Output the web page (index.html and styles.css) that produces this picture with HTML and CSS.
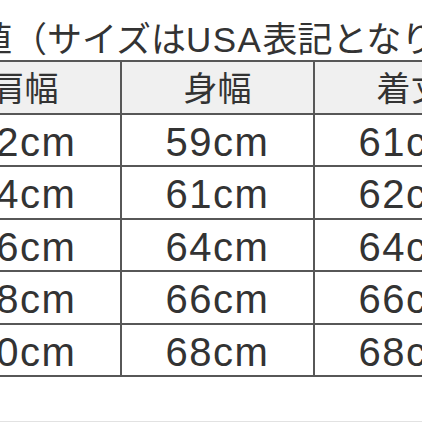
FILE: index.html
```html
<!DOCTYPE html>
<html lang="ja">
<head>
<meta charset="utf-8">
<title>サイズ表</title>
<link rel="stylesheet" href="styles.css">
</head>
<body>
<div class="page">
  <p class="title">実寸値（サイズは<span class="latin">USA</span>表記となります）</p>
  <table class="sizes">
    <thead>
      <tr><th>肩幅</th><th>身幅</th><th>着丈</th><th>袖丈</th></tr>
    </thead>
    <tbody>
      <tr><td>42cm</td><td>59cm</td><td>61cm</td><td>60cm</td></tr>
      <tr><td>44cm</td><td>61cm</td><td>62cm</td><td>61cm</td></tr>
      <tr><td>46cm</td><td>64cm</td><td>64cm</td><td>62cm</td></tr>
      <tr><td>48cm</td><td>66cm</td><td>66cm</td><td>63cm</td></tr>
      <tr><td>50cm</td><td>68cm</td><td>68cm</td><td>64cm</td></tr>
    </tbody>
  </table>
  <div class="divider"></div>
</div>
</body>
</html>
```
FILE: styles.css
```css
html, body {
  margin: 0;
  padding: 0;
  background: #ffffff;
  overflow: hidden;
}

.page {
  width: 422px;
  height: 422px;
  overflow: hidden;
  padding-top: 20px;
  box-sizing: border-box;
}

.title {
  margin: 0 0 0 -93px;
  font-family: "Liberation Sans", "Noto Sans CJK JP", sans-serif;
  font-size: 35px;
  line-height: 40px;
  color: #333333;
  white-space: nowrap;
}

.title .latin {
  letter-spacing: 1.5px;
}

.sizes {
  margin: 0 0 0 -73px;
  border-collapse: collapse;
  table-layout: fixed;
  width: 772px;
  color: #333333;
}

.sizes tr {
  height: 52.5px;
}

.sizes th,
.sizes td {
  width: 191px;
  padding: 0;
  border: 2px solid #575757;
  text-align: center;
  vertical-align: middle;
}

.sizes th {
  background: #f0f0f0;
  font-family: "Noto Sans CJK JP", sans-serif;
  font-size: 34px;
  font-weight: 400;
  line-height: 40px;
}

.sizes td {
  padding-top: 4px;
  font-family: "Liberation Sans", "Noto Sans CJK JP", sans-serif;
  font-size: 40px;
  line-height: 44px;
  letter-spacing: 1.5px;
}

.divider {
  margin-top: 44px;
  border-top: 1px solid #e2e2e2;
}
```
